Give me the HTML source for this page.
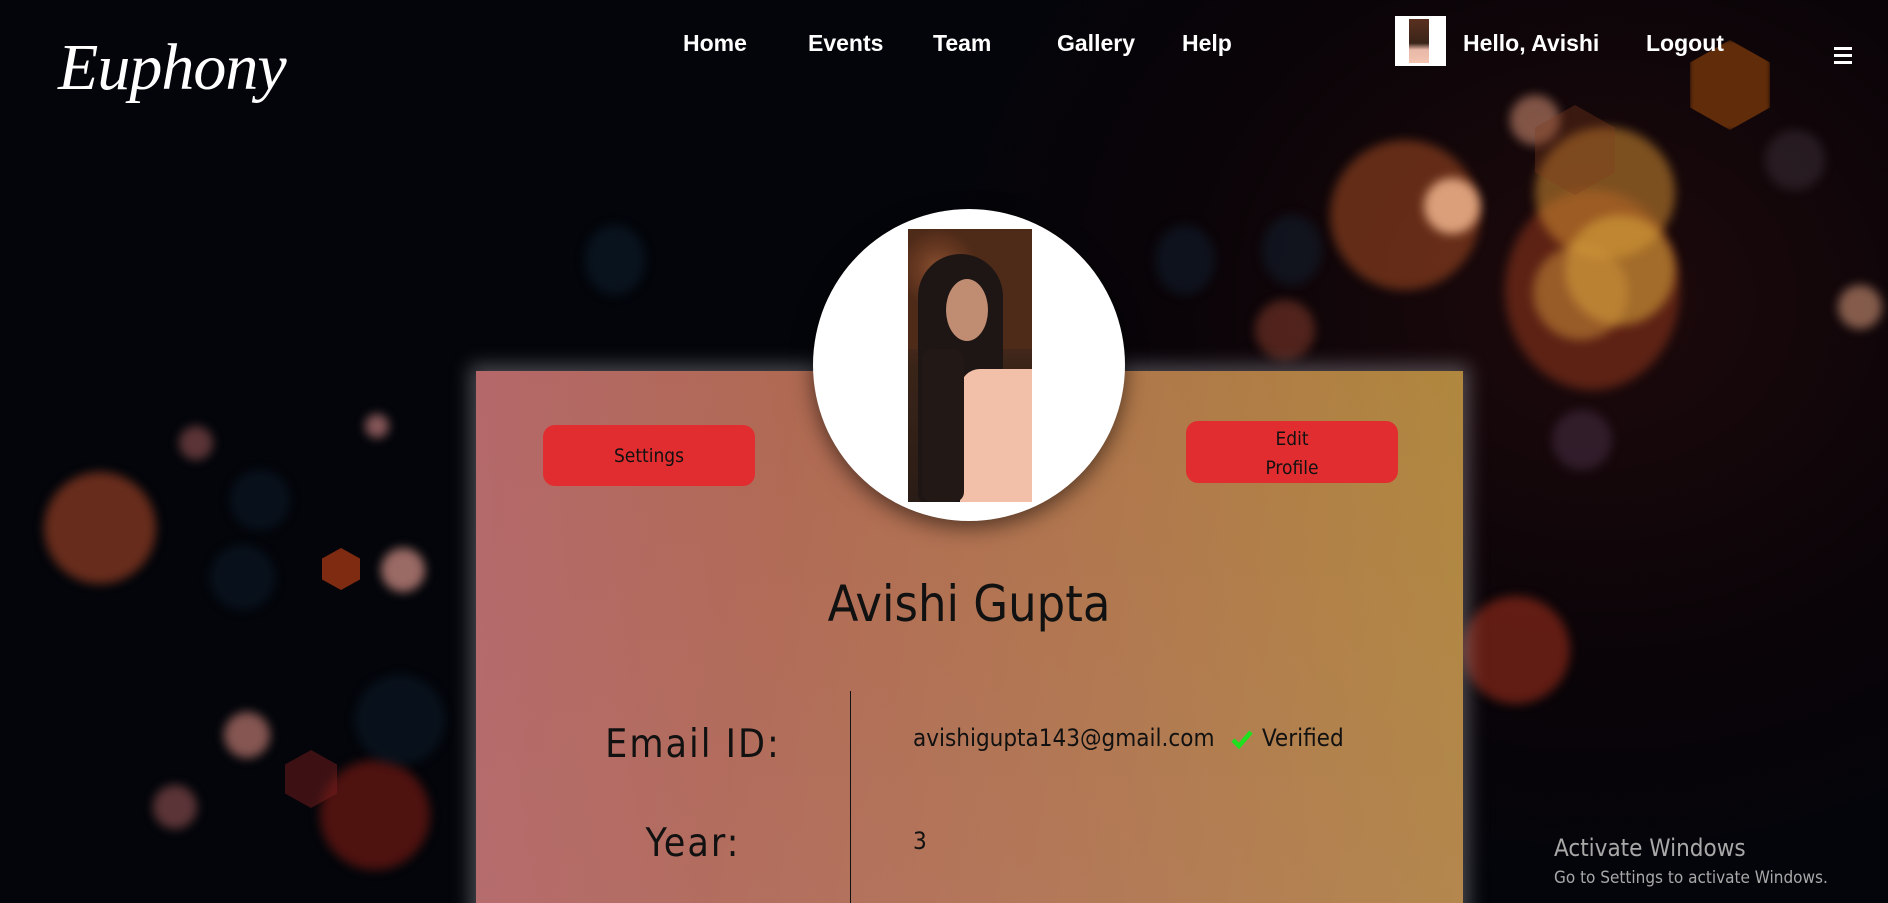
<!DOCTYPE html>
<html><head><meta charset="utf-8"><style>
*{margin:0;padding:0;box-sizing:border-box}
html,body{width:1888px;height:903px;overflow:hidden}
body{position:relative;background:radial-gradient(ellipse 700px 600px at 1600px 300px,#1e0a0c 0%,#0a0408 60%,#03050a 100%),#03050a;font-family:"Liberation Sans",sans-serif}
.b{position:absolute;border-radius:50%;filter:blur(5px)}
.nav{position:absolute;top:30px;color:#fff;font-family:"Liberation Sans Narrow","Liberation Sans",sans-serif;font-weight:bold;font-size:23px}
.logo{position:absolute;left:58px;top:30px;color:#fff;font-family:"Liberation Serif",serif;font-style:italic;font-size:66px;letter-spacing:-1px}
.card{position:absolute;left:476px;top:371px;width:987px;height:560px;background:linear-gradient(100deg,#b4686a 0%,#b06a52 30%,#b07a48 65%,#b08c3a 100%);box-shadow:0 0 18px 6px rgba(200,200,210,.35)}
.card:before{content:"";position:absolute;inset:0;background:linear-gradient(to bottom,rgba(0,0,0,0),rgba(190,120,140,.25))}
.btn{position:absolute;background:#e12d30;border-radius:12px;color:#111;font-size:19px;text-align:center;font-family:"DejaVu Sans Condensed","Liberation Sans",sans-serif}
.circle{position:absolute;left:813px;top:209px;width:312px;height:312px;border-radius:50%;background:#fff;box-shadow:0 6px 22px rgba(0,0,0,.55)}
.photo{position:absolute;background:linear-gradient(to bottom,#6b3a22 0%,#5a3020 30%,#3a2418 50%,#2a1c16 100%);overflow:hidden}
.t{position:absolute;color:#111;font-family:"DejaVu Sans Condensed","Liberation Sans",sans-serif}
</style></head><body>
<div class="b" style="left:1330px;top:140px;width:150px;height:150px;background:rgba(200,90,40,.45)"></div>
<div class="b" style="left:1505px;top:190px;width:175px;height:200px;background:rgba(160,60,30,.5)"></div>
<div class="b" style="left:1535px;top:127px;width:140px;height:132px;background:rgba(210,140,50,.55)"></div>
<div class="b" style="left:1565px;top:215px;width:110px;height:110px;background:rgba(220,170,60,.55)"></div>
<div class="b" style="left:1533px;top:245px;width:95px;height:95px;background:rgba(210,150,60,.5)"></div>
<div class="b" style="left:1424px;top:178px;width:56px;height:56px;background:rgba(240,180,140,.85)"></div>
<div class="b" style="left:1510px;top:95px;width:50px;height:50px;background:rgba(220,150,120,.55)"></div>
<div style="position:absolute;left:1690px;top:40px;width:80px;height:90px;background:rgba(150,70,10,.6);clip-path:polygon(50% 0,100% 25%,100% 75%,50% 100%,0 75%,0 25%);filter:blur(2px)"></div>
<div style="position:absolute;left:1535px;top:105px;width:80px;height:90px;background:rgba(130,60,30,.35);clip-path:polygon(50% 0,100% 25%,100% 75%,50% 100%,0 75%,0 25%)"></div>
<div class="b" style="left:1765px;top:130px;width:60px;height:60px;background:rgba(80,70,80,.35)"></div>
<div class="b" style="left:1838px;top:285px;width:44px;height:44px;background:rgba(210,150,120,.6)"></div>
<div class="b" style="left:1552px;top:410px;width:60px;height:60px;background:rgba(90,60,90,.4)"></div>
<div class="b" style="left:1462px;top:596px;width:108px;height:108px;background:rgba(170,50,30,.55)"></div>
<div class="b" style="left:1255px;top:300px;width:60px;height:60px;background:rgba(160,70,50,.45)"></div>
<div class="b" style="left:44px;top:472px;width:112px;height:112px;background:rgba(170,70,40,.6)"></div>
<div class="b" style="left:381px;top:548px;width:44px;height:44px;background:rgba(220,150,140,.7)"></div>
<div class="b" style="left:224px;top:712px;width:46px;height:46px;background:rgba(220,140,130,.6)"></div>
<div class="b" style="left:153px;top:785px;width:44px;height:44px;background:rgba(180,100,100,.5)"></div>
<div class="b" style="left:179px;top:426px;width:34px;height:34px;background:rgba(180,100,100,.5)"></div>
<div class="b" style="left:365px;top:414px;width:24px;height:24px;background:rgba(220,140,140,.6)"></div>
<div class="b" style="left:320px;top:760px;width:110px;height:110px;background:rgba(140,30,20,.55)"></div>
<div style="position:absolute;left:322px;top:548px;width:38px;height:42px;background:rgba(180,60,20,.7);clip-path:polygon(50% 0,100% 25%,100% 75%,50% 100%,0 75%,0 25%)"></div>
<div style="position:absolute;left:285px;top:750px;width:52px;height:58px;background:rgba(120,30,30,.5);clip-path:polygon(50% 0,100% 25%,100% 75%,50% 100%,0 75%,0 25%)"></div>
<div class="b" style="left:585px;top:225px;width:60px;height:70px;background:rgba(20,40,60,.4)"></div>
<div class="b" style="left:1155px;top:225px;width:60px;height:70px;background:rgba(20,40,60,.4)"></div>
<div class="b" style="left:1262px;top:215px;width:60px;height:70px;background:rgba(20,40,60,.4)"></div>
<div class="b" style="left:230px;top:470px;width:60px;height:60px;background:rgba(20,40,60,.35)"></div>
<div class="b" style="left:210px;top:545px;width:65px;height:65px;background:rgba(20,40,60,.35)"></div>
<div class="b" style="left:355px;top:675px;width:90px;height:90px;background:rgba(20,40,60,.35)"></div>

<div class="logo">Euphony</div>
<div class="nav" style="left:683px">Home</div>
<div class="nav" style="left:808px">Events</div>
<div class="nav" style="left:933px">Team</div>
<div class="nav" style="left:1057px">Gallery</div>
<div class="nav" style="left:1182px">Help</div>
<div style="position:absolute;left:1395px;top:16px;width:51px;height:50px;background:#fff"></div>
<div class="photo" style="left:1409px;top:19px;width:20px;height:44px;background:linear-gradient(#5a3020,#3a2418 55%,#e8b8a8 70%,#f3c4b0)"></div>
<div class="nav" style="left:1463px">Hello, Avishi</div>
<div class="nav" style="left:1646px">Logout</div>
<div style="position:absolute;left:1834px;top:47px;width:18px;height:3px;background:#fff;box-shadow:0 7px 0 #fff,0 14px 0 #fff"></div>

<div class="card"></div>
<div style="position:absolute;left:850px;top:691px;width:1px;height:212px;background:#111"></div>
<div class="btn" style="left:543px;top:425px;width:212px;height:61px;line-height:63px">Settings</div>
<div class="btn" style="left:1186px;top:421px;width:212px;height:62px;padding-top:4px;line-height:29px">Edit<br>Profile</div>

<div class="circle"></div>
<div class="photo" style="left:908px;top:229px;width:124px;height:273px">
 <div style="position:absolute;left:0;top:0;width:124px;height:120px;background:radial-gradient(circle at 30px 40px,#8a5030 0,#6a3a22 20px,#4e2a18 40px),#5a3020"></div>
 <div style="position:absolute;left:10px;top:25px;width:85px;height:250px;border-radius:45px 45px 10px 10px;background:#1e1614"></div>
 <div style="position:absolute;left:38px;top:50px;width:42px;height:62px;border-radius:50%;background:#c08c72"></div>
 <div style="position:absolute;left:52px;top:140px;width:72px;height:133px;border-radius:20px 0 0 0;background:#f2c0a8"></div>
 <div style="position:absolute;left:14px;top:120px;width:42px;height:153px;border-radius:10px;background:#221816"></div>
</div>

<div class="t" style="left:0;width:1938px;text-align:center;top:575px;font-size:50px">Avishi Gupta</div>
<div class="t" style="left:560px;width:266px;text-align:center;top:722px;font-size:39px;letter-spacing:2px">Email ID:</div>
<div class="t" style="left:560px;width:266px;text-align:center;top:821px;font-size:39px;letter-spacing:2px">Year:</div>
<div class="t" style="left:913px;top:724px;font-size:24px">avishigupta143@gmail.com</div>
<svg style="position:absolute;left:1231px;top:729px" width="22" height="20" viewBox="0 0 22 20"><path d="M2 11 L8 17 L20 3" stroke="#1ee01e" stroke-width="4.5" fill="none"/></svg>
<div class="t" style="left:1262px;top:724px;font-size:24px">Verified</div>
<div class="t" style="left:913px;top:827px;font-size:24px">3</div>

<div style="position:absolute;left:1554px;top:834px;color:#a8a8a8;font-size:24px;font-family:'DejaVu Sans Condensed','Liberation Sans',sans-serif">Activate Windows</div>
<div style="position:absolute;left:1554px;top:868px;color:#a8a8a8;font-size:17px;font-family:'DejaVu Sans Condensed','Liberation Sans',sans-serif">Go to Settings to activate Windows.</div>
</body></html>
